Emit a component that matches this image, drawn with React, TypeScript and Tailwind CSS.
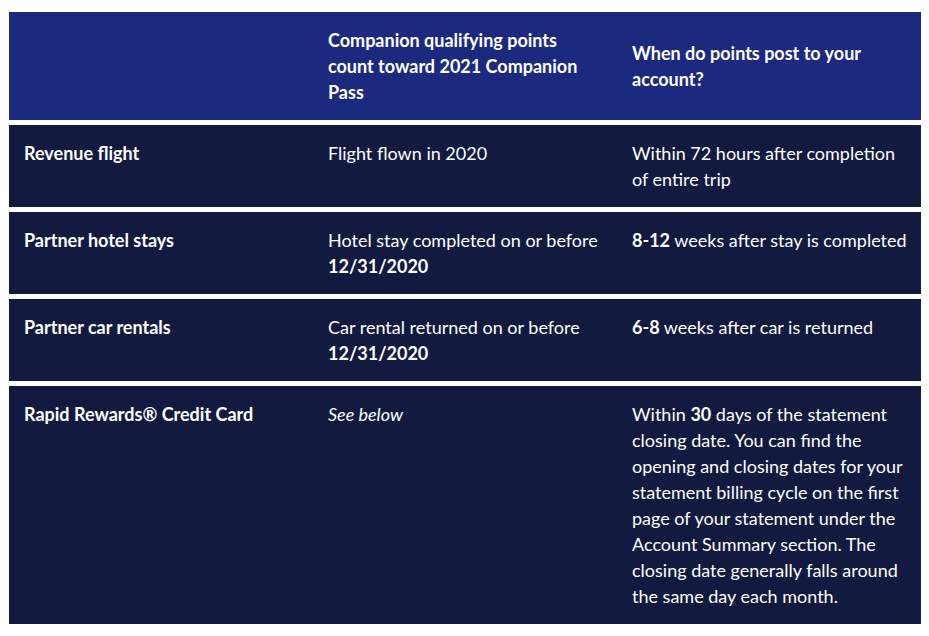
import React from "react";

const cell = "pl-[15px] pr-[13px] py-[15px]";

export default function App() {
  return (
    <div
      className="w-[929px] h-[636px] bg-white pt-[12px] pl-[9px] text-white text-[18px] leading-[26px]"
      style={{ fontFamily: "Lato, 'Noto Sans', sans-serif" }}
    >
      <div className="w-[912px] flex flex-col gap-[5px]">
        <div className="grid grid-cols-3 bg-[#1b2a7f] font-bold items-center">
          <div className={cell}></div>
          <div className={cell}>Companion qualifying points count toward 2021 Companion Pass</div>
          <div className={cell}>When do points post to your account?</div>
        </div>
        <div className="grid grid-cols-3 bg-[#121a3f]">
          <div className={cell + " font-bold"}>Revenue flight</div>
          <div className={cell}>Flight flown in 2020</div>
          <div className={cell}>Within 72 hours after completion of entire trip</div>
        </div>
        <div className="grid grid-cols-3 bg-[#121a3f]">
          <div className={cell + " font-bold"}>Partner hotel stays</div>
          <div className={cell}>
            Hotel stay completed on or before <b>12/31/2020</b>
          </div>
          <div className={cell}>
            <b>8-12</b> weeks after stay is completed
          </div>
        </div>
        <div className="grid grid-cols-3 bg-[#121a3f]">
          <div className={cell + " font-bold"}>Partner car rentals</div>
          <div className={cell}>
            Car rental returned on or before <b>12/31/2020</b>
          </div>
          <div className={cell}>
            <b>6-8</b> weeks after car is returned
          </div>
        </div>
        <div className="grid grid-cols-3 bg-[#121a3f]">
          <div className={cell + " font-bold"}>Rapid Rewards® Credit Card</div>
          <div className={cell + " italic"}>See below</div>
          <div className={cell}>
            Within <b>30</b> days of the statement closing date. You can find the opening and closing dates for your
            statement billing cycle on the first page of your statement under the Account Summary section. The
            closing date generally falls around the same day each month.
          </div>
        </div>
      </div>
    </div>
  );
}
